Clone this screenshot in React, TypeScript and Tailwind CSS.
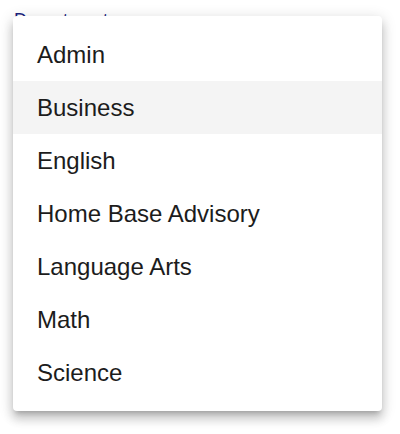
import React from 'react';

const departments = [
  'Admin',
  'Business',
  'English',
  'Home Base Advisory',
  'Language Arts',
  'Math',
  'Science',
];

export default function App() {
  const highlighted = 'Business';

  return (
    <div className="relative w-[400px] h-[434px] bg-white overflow-hidden font-['Liberation_Sans',Arial,sans-serif]">
      {/* Field label behind the open menu */}
      <div className="pl-[14px] pt-[9px] text-[18px] leading-[22px] text-[#1a237e]">Department</div>

      {/* Popover menu */}
      <div className="absolute left-[13px] top-[16px] w-[369px] bg-white rounded-[4px] py-[12px] shadow-[0px_5px_5px_-3px_rgba(0,0,0,0.2),0px_8px_10px_1px_rgba(0,0,0,0.14),0px_3px_14px_2px_rgba(0,0,0,0.12)]">
        <ul>
          {departments.map((d) => (
            <li
              key={d}
              className={`h-[53px] flex items-center pl-[24px] text-[24px] text-[#1c1c1c] ${
                d === highlighted ? 'bg-[#f4f4f4]' : ''
              }`}
            >
              {d}
            </li>
          ))}
        </ul>
      </div>
    </div>
  );
}
